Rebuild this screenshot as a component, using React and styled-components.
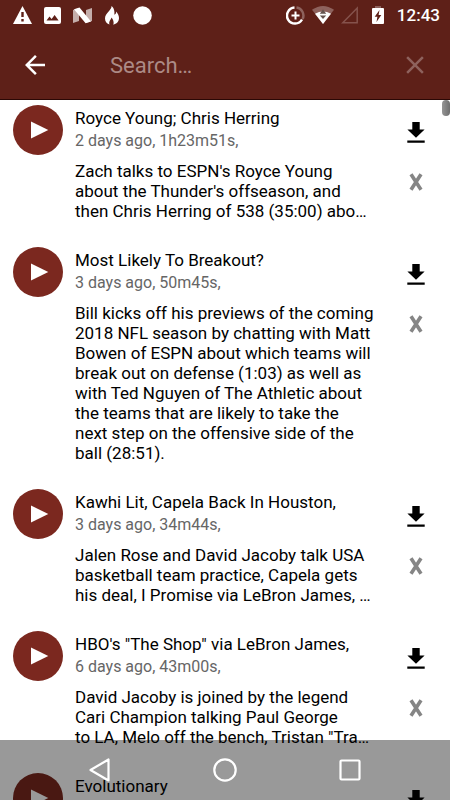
import React from "react";
import styled, { createGlobalStyle } from "styled-components";

const GlobalStyle = createGlobalStyle`
  * {
    box-sizing: border-box;
  }

  body {
    margin: 0;
    background: #fff;
    font-family: Roboto, "Liberation Sans", sans-serif;
  }

  button {
    display: flex;
    align-items: center;
    justify-content: center;
    padding: 0;
    border: 0;
    background: none;
    cursor: pointer;
  }

  svg {
    display: block;
    flex: none;
  }
`;

const Screen = styled.div`
  position: relative;
  display: flex;
  flex-direction: column;
  height: 100vh;
  overflow: hidden;
`;

const Header = styled.header`
  flex: none;
  background: #5e2018;
  border-bottom: 1px solid #2b0805;
`;

const StatusBar = styled.div`
  display: flex;
  align-items: center;
  justify-content: space-between;
  height: 30px;
  padding: 0 10px 0 12px;
`;

const StatusGroup = styled.div`
  display: flex;
  align-items: center;
  gap: ${(props) => props.$gap};
`;

const Clock = styled.time`
  color: #fff;
  font-size: 17px;
  font-weight: 500;
  line-height: 30px;
`;

const SearchBar = styled.form`
  display: flex;
  align-items: center;
  height: 69px;
  padding: 0 20px;
`;

const SearchInput = styled.input`
  flex: 1;
  min-width: 0;
  height: 40px;
  margin: 0 20px 0 60px;
  padding: 2px 0 0;
  border: 0;
  outline: 0;
  background: none;
  color: #fff;
  font-family: inherit;
  font-size: 22px;

  &::placeholder {
    color: #ac8a86;
    opacity: 1;
  }
`;

const ListArea = styled.main`
  position: relative;
  flex: 1;
  min-height: 0;
  overflow: hidden;
`;

const ScrollThumb = styled.div`
  position: absolute;
  top: 0;
  right: 0;
  width: 8px;
  height: 16px;
  border-radius: 4px;
  background: linear-gradient(to right, #959595, #6e6e6e);
`;

const EpisodeList = styled.ul`
  margin: 0;
  padding: 0;
  list-style: none;
`;

const Episode = styled.li`
  display: flex;
  align-items: flex-start;
  padding: 5px 25px 21px 13px;
`;

const PlayButton = styled.button`
  flex: none;
  width: 50px;
  height: 50px;
  border-radius: 50%;

  && {
    background: #7b281f;
  }
`;

const Details = styled.div`
  flex: 1;
  min-width: 0;
  padding: 2px 0 0 12px;
`;

const Title = styled.h2`
  margin: 0;
  color: #000;
  font-size: 17px;
  font-weight: 400;
  line-height: 22px;
`;

const Meta = styled.p`
  margin: 0;
  color: #666;
  font-size: 16px;
  line-height: 24px;
`;

const Description = styled.p`
  margin: 8px 0 0;
  color: #000;
  font-size: 17px;
  line-height: 20px;
`;

const Actions = styled.div`
  display: flex;
  flex: none;
  flex-direction: column;
  align-items: center;
  gap: 30px;
  width: 18px;
  margin-left: 30px;
  padding-top: 16px;
`;

const NavBar = styled.nav`
  position: absolute;
  right: 0;
  bottom: 0;
  left: 0;
  display: flex;
  height: 60px;
  padding: 0 38px;
  background: rgba(0, 0, 0, 0.4);
`;

const NavButton = styled.button`
  flex: 1;
`;

const episodes = [
  {
    title: "Royce Young; Chris Herring",
    meta: "2 days ago, 1h23m51s,",
    description:
      "Zach talks to ESPN's Royce Young about the Thunder's offseason, and then\u00a0Chris Herring of 538 (35:00) abo…",
  },
  {
    title: "Most Likely To Breakout?",
    meta: "3 days ago, 50m45s,",
    description:
      "Bill kicks off his previews of the coming 2018 NFL season by chatting with Matt Bowen of ESPN about which teams will break out on defense (1:03) as well as with Ted Nguyen of The Athletic about the teams that are likely to take the next\u00a0step on the offensive side of the ball\u00a0(28:51).",
  },
  {
    title: "Kawhi Lit, Capela Back In Houston,",
    meta: "3 days ago, 34m44s,",
    description:
      "Jalen Rose and David Jacoby talk USA basketball team practice, Capela gets his deal, I Promise via LeBron James, …",
  },
  {
    title: "HBO's \"The Shop\" via LeBron James,",
    meta: "6 days ago, 43m00s,",
    description:
      "David Jacoby is joined by the legend Cari Champion talking Paul George to\u00a0LA,\u00a0Melo off the bench, Tristan \"Tra…",
  },
  {
    title: "Evolutionary",
  },
];

function LeftStatusIcons() {
  return (
    <StatusGroup $gap="12px">
      <svg width="20" height="18" viewBox="0 0 20 18">
        <path d="M10.5 0 20 18H1Z" fill="#fff" />
        <path d="M9.3 6h2.4v5H9.3zM9.3 13h2.4v2.4H9.3z" fill="#5e2018" />
      </svg>
      <svg width="17" height="17" viewBox="0 0 17 17">
        <rect width="17" height="17" rx="2" fill="#fff" />
        <path d="M2.5 13.5 5.5 9.5 7.6 12 10.6 8 14.6 13.5Z" fill="#5e2018" />
      </svg>
      <svg width="19" height="17" viewBox="0 0 19 17">
        <path d="M0 3 6 1V14L0 16ZM13 3 19 1V14L13 16Z" fill="#c4aeab" />
        <path d="M1 2.2 6.5 0.5 18 14.5 12.6 16.2Z" fill="#fff" />
      </svg>
      <svg width="16" height="19" viewBox="0 0 16 19">
        <path
          d="M7.5 0C8 4 1 7 1 12.5 1 15.7 3 18 5.6 18.6 4.4 16 6.4 14.2 7.6 11.5 8.8 13 10.4 16 9.3 18.7 12.5 18 15 15.6 15 12 15 9.5 13.7 7.5 12.2 5.5 12.2 7.3 11.5 8.5 10.3 8.7 11 5.5 9.8 1.6 7.5 0Z"
          fill="#fff"
        />
      </svg>
      <svg width="20" height="19" viewBox="0 0 20 19">
        <circle cx="10.5" cy="9.5" r="9.3" fill="#fff" />
      </svg>
    </StatusGroup>
  );
}

function RightStatusIcons() {
  return (
    <StatusGroup $gap="7px">
      <svg width="19" height="19" viewBox="0 0 19 19" fill="none">
        <path d="M10.5 1.6A8 8 0 0 1 16.6 13" stroke="#8e625d" strokeWidth="2.5" />
        <path d="M8.5 1.6A8 8 0 1 0 16 13.5" stroke="#fff" strokeWidth="2.5" />
        <path d="M9.5 5.5v8M5.5 9.5h8" stroke="#fff" strokeWidth="2" />
      </svg>
      <svg width="22" height="18" viewBox="0 0 22 18">
        <path d="M0 3.8Q11-3.8 22 3.8L11 18Z" fill="#8e625d" />
        <path d="M3 7.8Q11 3 19 7.8L11 18Z" fill="#fff" />
        <path d="M7.8 7.8 11 3.2 14.2 7.8ZM7.8 9.4H14.2L11 13Z" fill="#66544f" />
      </svg>
      <svg width="18" height="18" viewBox="0 0 18 18">
        <path d="M16.2 2V16.7H1.8Z" fill="none" stroke="#85524c" strokeWidth="1.5" />
      </svg>
      <svg width="24" height="18" viewBox="0 0 24 18">
        <path d="M9 0h6v2h-6z" fill="#8e625d" />
        <rect x="6" y="2" width="12" height="16" rx="1" fill="#fff" />
        <path d="M13.5 4 8.7 10.7H11.4L10.5 16 15.3 9H12.6Z" fill="#5e2018" />
      </svg>
      <Clock>12:43</Clock>
    </StatusGroup>
  );
}

function EpisodeRow({ episode }) {
  return (
    <Episode>
      <PlayButton type="button" aria-label={"Play " + episode.title}>
        <svg width="50" height="50" viewBox="0 0 50 50">
          <path d="M18 16.5 35.3 25 18 33.5Z" fill="#fff" />
        </svg>
      </PlayButton>
      <Details>
        <Title>{episode.title}</Title>
        {episode.meta && <Meta>{episode.meta}</Meta>}
        {episode.description && <Description>{episode.description}</Description>}
      </Details>
      <Actions>
        <button type="button" aria-label={"Download " + episode.title}>
          <svg width="18" height="22" viewBox="0 0 18 22">
            <path d="M5.3 1h7.4v7.5H17.6L9 16.8.4 8.5H5.3ZM.3 19.6h17.4v2.2H.3z" fill="#000" />
          </svg>
        </button>
        <button type="button" aria-label={"Remove " + episode.title}>
          <svg width="14" height="18" viewBox="0 0 14 18">
            <path d="M2 1.2 12 16.8M12 1.2 2 16.8" stroke="#858585" strokeWidth="3.6" />
          </svg>
        </button>
      </Actions>
    </Episode>
  );
}

function App() {
  return (
    <Screen>
      <GlobalStyle />
      <Header>
        <StatusBar>
          <LeftStatusIcons />
          <RightStatusIcons />
        </StatusBar>
        <SearchBar role="search">
          <button type="button" aria-label="Back">
            <svg width="30" height="30" viewBox="0 0 24 24">
              <path d="M20 11H7.83l5.59-5.59L12 4l-8 8 8 8 1.41-1.41L7.83 13H20v-2z" fill="#fff" />
            </svg>
          </button>
          <SearchInput type="text" placeholder="Search…" aria-label="Search" />
          <button type="reset" aria-label="Clear">
            <svg width="30" height="30" viewBox="0 0 24 24">
              <path
                d="M19 6.41 17.59 5 12 10.59 6.41 5 5 6.41 10.59 12 5 17.59 6.41 19 12 13.41 17.59 19 19 17.59 13.41 12z"
                fill="#8e625d"
              />
            </svg>
          </button>
        </SearchBar>
      </Header>
      <ListArea>
        <EpisodeList>
          {episodes.map((episode) => (
            <EpisodeRow key={episode.title} episode={episode} />
          ))}
        </EpisodeList>
        <ScrollThumb />
      </ListArea>
      <NavBar>
        <NavButton type="button" aria-label="Back">
          <svg width="24" height="26" viewBox="0 0 24 26">
            <path d="M20.5 2.5V23.5L2.5 13Z" fill="none" stroke="#fff" strokeWidth="2.2" strokeLinejoin="round" />
          </svg>
        </NavButton>
        <NavButton type="button" aria-label="Home">
          <svg width="24" height="24" viewBox="0 0 24 24">
            <circle cx="12" cy="12" r="10.7" fill="none" stroke="#fff" strokeWidth="2.2" />
          </svg>
        </NavButton>
        <NavButton type="button" aria-label="Recent apps">
          <svg width="22" height="22" viewBox="0 0 22 22">
            <rect x="1.5" y="1.5" width="19" height="19" rx="1" fill="none" stroke="#fff" strokeWidth="2.2" />
          </svg>
        </NavButton>
      </NavBar>
    </Screen>
  );
}

export default App;
